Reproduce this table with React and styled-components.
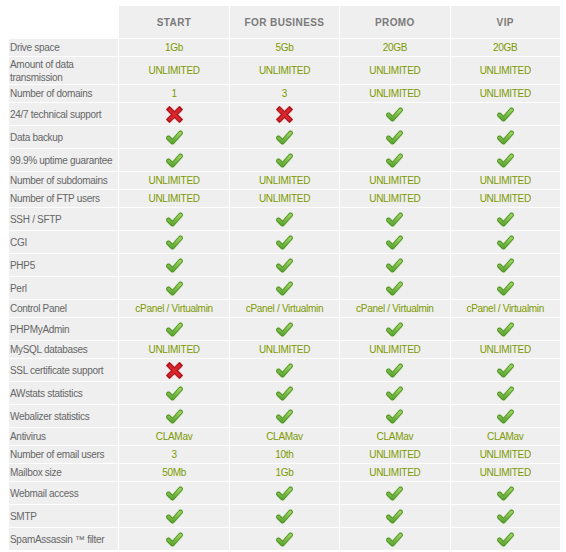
import React from "react";
import styled, { createGlobalStyle } from "styled-components";

const Global = createGlobalStyle`
  html, body { margin: 0; padding: 0; background: #ffffff; }
  body { font-family: "Liberation Sans", Arial, sans-serif; }
`;

const Page = styled.div`
  padding: 5px 0 0 8px;
`;

const Table = styled.table`
  width: 553px;
  border-collapse: separate;
  border-spacing: 1px;
  table-layout: fixed;
`;

const HeadCell = styled.th`
  height: 32px;
  padding: 0;
  background: ${(p) => (p.$blank ? "transparent" : "#efefef")};
  color: #7a7a7a;
  font-size: 10px;
  font-weight: bold;
  letter-spacing: 0.4px;
  text-align: center;
  vertical-align: middle;
`;

const Label = styled.td`
  height: ${(p) => (p.$tall ? 27 : p.$icon ? 22 : 17)}px;
  padding: 0 0 0 1px;
  background: #efefef;
  color: #666666;
  font-size: 10px;
  letter-spacing: -0.3px;
  line-height: 13px;
  vertical-align: middle;
`;

const Value = styled.td`
  padding: 0;
  background: #efefef;
  color: #7c9a00;
  font-size: 10px;
  letter-spacing: -0.3px;
  text-align: center;
  vertical-align: middle;
  line-height: 13px;
`;

const IconBox = styled.span`
  display: inline-flex;
  width: 17px;
  height: 17px;
  vertical-align: middle;
`;

const Check = () => (
  <IconBox>
    <svg width="17" height="17" viewBox="0 0 17 17">
      <defs>
        <linearGradient id="cg" x1="0" y1="0" x2="0" y2="1">
          <stop offset="0" stopColor="#9bd45f" />
          <stop offset="1" stopColor="#5fa834" />
        </linearGradient>
      </defs>
      <path d="M2.5 9 L6.5 13 L14.5 4" fill="none" stroke="#c4e2ad" strokeWidth="6" strokeLinecap="round" strokeLinejoin="round" opacity="0.7" />
      <path d="M2.5 9 L6.5 13 L14.5 4" fill="none" stroke="#4f8f27" strokeWidth="4.6" strokeLinecap="round" strokeLinejoin="round" />
      <path d="M2.5 9 L6.5 13 L14.5 4" fill="none" stroke="url(#cg)" strokeWidth="2.8" strokeLinecap="round" strokeLinejoin="round" />
    </svg>
  </IconBox>
);

const Cross = () => (
  <IconBox>
    <svg width="17" height="17" viewBox="0 0 17 17">
      <path d="M3.5 3.5 L13.5 13.5 M13.5 3.5 L3.5 13.5" fill="none" stroke="#e9a3a3" strokeWidth="6.4" strokeLinecap="round" opacity="0.7" />
      <path d="M3.5 3.5 L13.5 13.5 M13.5 3.5 L3.5 13.5" fill="none" stroke="#a8121a" strokeWidth="5" strokeLinecap="square" />
      <path d="M3.8 3.8 L13.2 13.2 M13.2 3.8 L3.8 13.2" fill="none" stroke="#d8262c" strokeWidth="2.8" strokeLinecap="square" />
    </svg>
  </IconBox>
);

const Y = "Y";
const N = "N";
const U = "UNLIMITED";
const CP = "cPanel / Virtualmin";

const rows = [
  ["Drive space", ["1Gb", "5Gb", "20GB", "20GB"]],
  ["Amount of data transmission", [U, U, U, U], true],
  ["Number of domains", ["1", "3", U, U]],
  ["24/7 technical support", [N, N, Y, Y]],
  ["Data backup", [Y, Y, Y, Y]],
  ["99.9% uptime guarantee", [Y, Y, Y, Y]],
  ["Number of subdomains", [U, U, U, U]],
  ["Number of FTP users", [U, U, U, U]],
  ["SSH / SFTP", [Y, Y, Y, Y]],
  ["CGI", [Y, Y, Y, Y]],
  ["PHP5", [Y, Y, Y, Y]],
  ["Perl", [Y, Y, Y, Y]],
  ["Control Panel", [CP, CP, CP, CP]],
  ["PHPMyAdmin", [Y, Y, Y, Y]],
  ["MySQL databases", [U, U, U, U]],
  ["SSL certificate support", [N, Y, Y, Y]],
  ["AWstats statistics", [Y, Y, Y, Y]],
  ["Webalizer statistics", [Y, Y, Y, Y]],
  ["Antivirus", ["CLAMav", "CLAMav", "CLAMav", "CLAMav"]],
  ["Number of email users", ["3", "10th", U, U]],
  ["Mailbox size", ["50Mb", "1Gb", U, U]],
  ["Webmail access", [Y, Y, Y, Y]],
  ["SMTP", [Y, Y, Y, Y]],
  ["SpamAssassin \u2122 filter", [Y, Y, Y, Y]],
];

const plans = ["START", "FOR BUSINESS", "PROMO", "VIP"];

const renderValue = (v) => (v === Y ? <Check /> : v === N ? <Cross /> : v);

export default function App() {
  return (
    <Page>
      <Global />
      <Table>
        <thead>
          <tr>
            <HeadCell $blank />
            {plans.map((p) => (
              <HeadCell key={p}>{p}</HeadCell>
            ))}
          </tr>
        </thead>
        <tbody>
          {rows.map(([label, vals, tall]) => {
            const icon = vals.some((v) => v === Y || v === N);
            return (
              <tr key={label}>
                <Label $tall={tall} $icon={icon}>
                  {tall ? (
                    <>
                      Amount of data
                      <br />
                      transmission
                    </>
                  ) : (
                    label
                  )}
                </Label>
                {vals.map((v, i) => (
                  <Value key={i}>{renderValue(v)}</Value>
                ))}
              </tr>
            );
          })}
        </tbody>
      </Table>
    </Page>
  );
}
